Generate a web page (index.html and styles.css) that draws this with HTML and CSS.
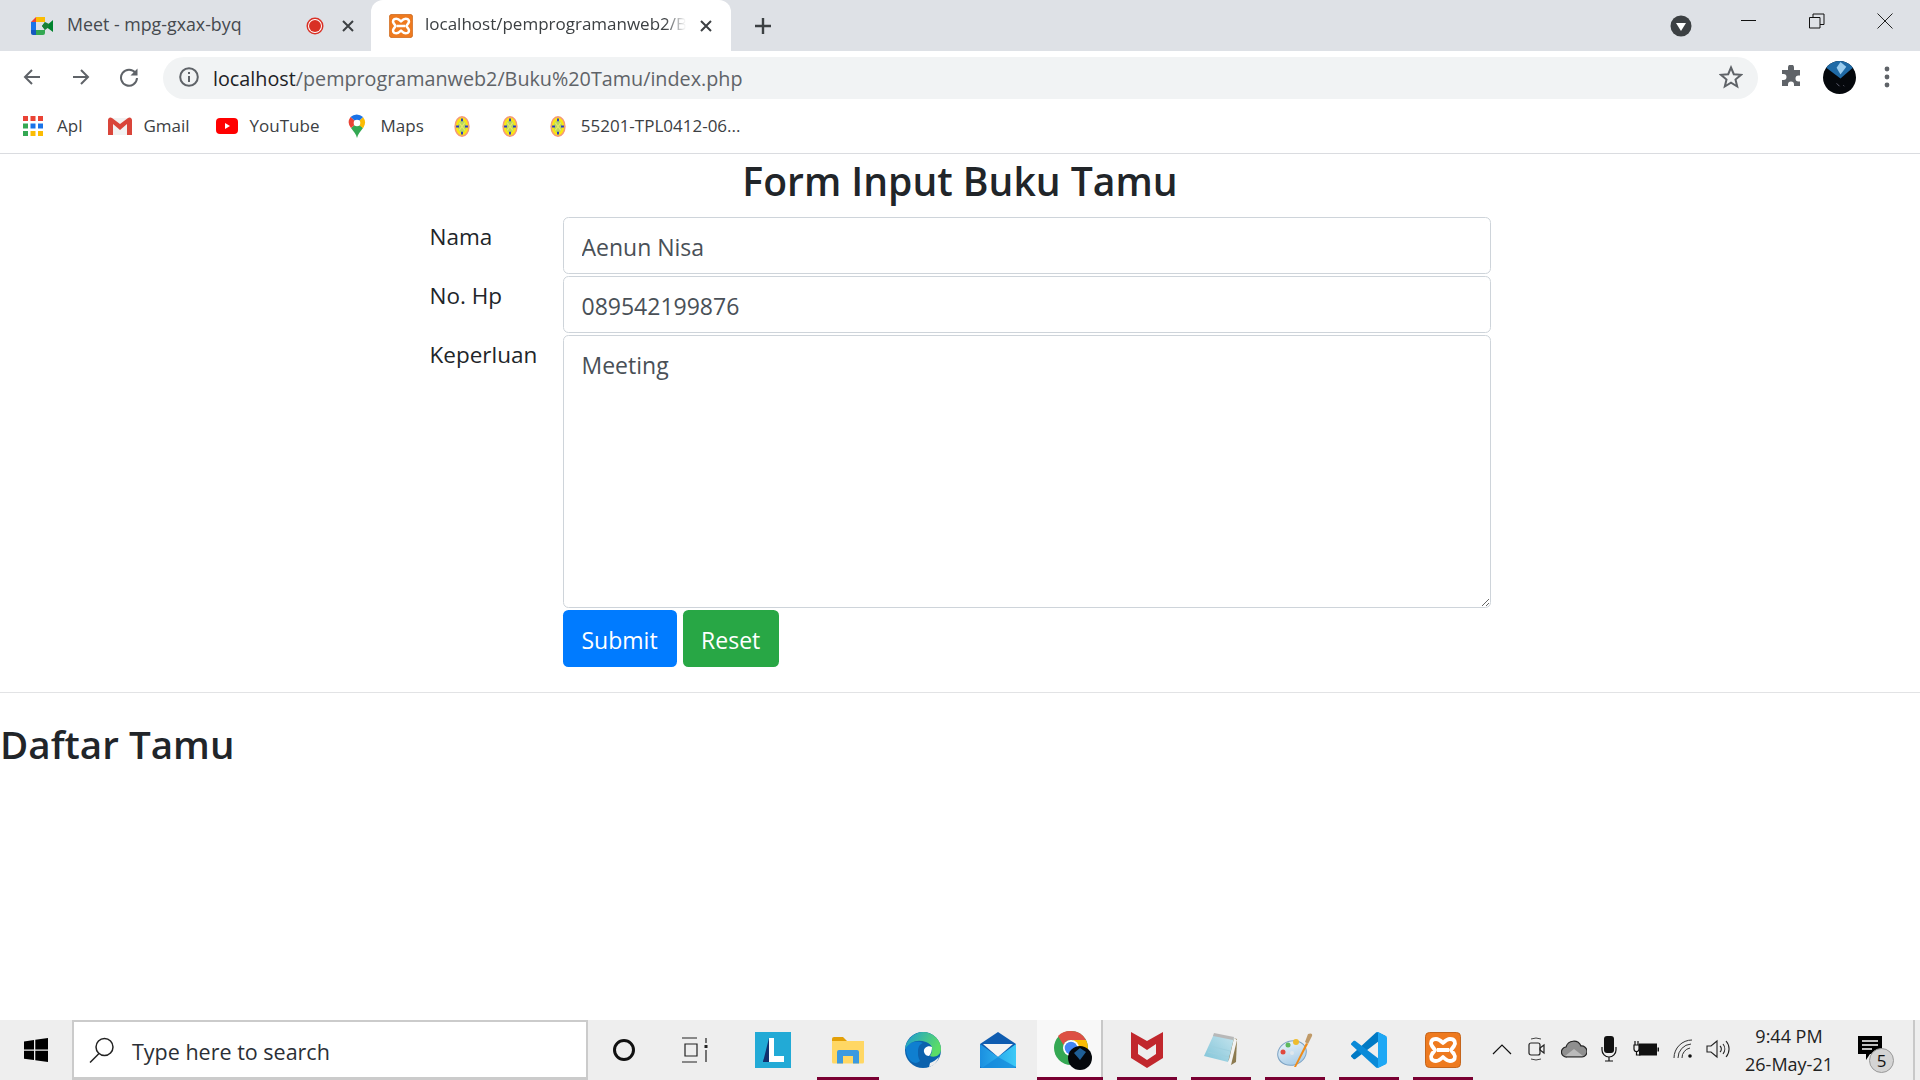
FILE: index.html
```html
<!DOCTYPE html>
<html lang="id">
<head>
<meta charset="utf-8">
<title>Form Input Buku Tamu</title>
<link rel="stylesheet" href="styles.css">
</head>
<body>
<header class="chrome">
  <div class="tabstrip">
    <div class="tab tab-inactive">
      <svg class="fav-meet" viewBox="0 0 22 18"><path d="M0 5 5 0v5z" fill="#ea4335"/><path d="M5 0h9v5H5z" fill="#fbbc04"/><path d="M0 5h5v8H0z" fill="#1a73e8"/><path d="M0 13h5v5H2a2 2 0 0 1-2-2z" fill="#1558c0"/><path d="M5 13h9v3a2 2 0 0 1-2 2H5z" fill="#34a853"/><path d="M14 0v5l-3 4 3 4v-3l8-7v12l-8-6z" fill="#00832d"/><path d="M14 5l-3 4 3 4 4-3V7z" fill="#188038"/><path d="M12 0h2v5h-3z" fill="#fbbc04"/></svg>
      <span class="tab-title">Meet - mpg-gxax-byq</span>
      <svg class="rec" viewBox="0 0 18 18"><circle cx="9" cy="9" r="8.500" fill="#d93025"/><circle cx="9" cy="9" r="7" fill="#fff"/><circle cx="9" cy="9" r="6" fill="#d93025"/></svg>
      <svg class="tab-x" viewBox="0 0 12 12"><path d="M1 1l10 10M11 1 1 11" stroke="#3c4043" stroke-width="2"/></svg>
    </div>
    <div class="tab tab-active">
      <svg class="fav-xampp" viewBox="0 0 36 36"><rect x=".5" y=".5" width="35" height="35" rx="4" fill="#ee7a1f" stroke="#c4651c"/><path d="M11 7C14 7 16 9 18 11 20 9 22 7 25 7 30 7 31 11 29 14L26 18 29 22C31 25 30 29 25 29 22 29 20 27 18 25 16 27 14 29 11 29 6 29 5 25 7 22L10 18 7 14C5 11 6 7 11 7ZM12 18H24" fill="none" stroke="#fff" stroke-width="3.800" stroke-linejoin="round"/></svg>
      <span class="tab-title tab-fade">localhost/pemprogramanweb2/B</span>
      <svg class="tab-x" viewBox="0 0 12 12"><path d="M1 1l10 10M11 1 1 11" stroke="#3c4043" stroke-width="2"/></svg>
    </div>
    <svg class="newtab" viewBox="0 0 18 18"><path d="M9 1v16M1 9h16" stroke="#3c4043" stroke-width="2.400"/></svg>
    <svg class="tabsearch" viewBox="0 0 22 22"><circle cx="11" cy="11" r="10.500" fill="#3c4043"/><path d="M6 8h10l-5 8z" fill="#fff"/></svg>
    <div class="winctl">
      <svg viewBox="0 0 16 16"><path d="M0 7.500h15" stroke="#111" stroke-width="1"/></svg>
      <svg viewBox="0 0 16 16"><path d="M.5 4.500h10.500v10.500H.5zM4 4.500V1h11v10.500h-4" fill="none" stroke="#111"/></svg>
      <svg viewBox="0 0 16 16"><path d="M.5.500l15 15M15.500.500l-15 15" stroke="#222"/></svg>
    </div>
  </div>
  <div class="toolbar">
    <svg class="nav nav-first" viewBox="0 0 20 20"><path d="M18 10H3M10 3l-7 7 7 7" fill="none" stroke="#5f6368" stroke-width="2"/></svg>
    <svg class="nav" viewBox="0 0 20 20"><path d="M2 10h15M10 3l7 7-7 7" fill="none" stroke="#5f6368" stroke-width="2"/></svg>
    <svg class="nav nav-reload" viewBox="0 0 20 20"><path d="M16.500 6A8 8 0 1 0 18 11" fill="none" stroke="#5f6368" stroke-width="2"/><path d="M18.500 1.500v7h-7z" fill="#5f6368"/></svg>
    <div class="omnibox">
      <svg class="info" viewBox="0 0 20 20"><circle cx="10" cy="10" r="8.800" fill="none" stroke="#5f6368" stroke-width="2"/><path d="M9 9h2v6H9zM9 5h2v2H9z" fill="#5f6368"/></svg>
      <span class="url"><b>localhost</b>/pemprogramanweb2/Buku%20Tamu/index.php</span>
      <svg class="star" viewBox="0 0 24 24"><path d="M12 2.500l2.800 6.700 7.200.6-5.500 4.700 1.700 7L12 17.700l-6.200 3.800 1.700-7L2 9.800l7.200-.6z" fill="none" stroke="#5f6368" stroke-width="2"/></svg>
    </div>
    <svg class="puzzle" viewBox="0 0 24 24"><path d="M9 3.500a3 3 0 0 1 6 0V6h6v5.500h-1.500a3 3 0 0 0 0 6H21V22h-6v-1.500a3 3 0 0 0-6 0V22H3v-6h1.500a3 3 0 0 0 0-6H3V6h6z" fill="#5f6368" transform="translate(0 -1)"/></svg>
    <svg class="avatar" viewBox="0 0 34 34"><defs><clipPath id="av"><circle cx="17" cy="17" r="17"/></clipPath></defs><g clip-path="url(#av)"><rect width="34" height="34" fill="#05080c"/><path d="M0 0h34v4L18 18 2 6 0 4z" fill="#1f6aa6"/><path d="M18 1l6 5-6 8-4-7z" fill="#9ccdee"/><path d="M21 25l1 1M14 23l3 3" stroke="#667" stroke-width="1"/></g></svg>
    <svg class="kebab" viewBox="0 0 6 22"><circle cx="3" cy="3" r="2.400" fill="#5f6368"/><circle cx="3" cy="11" r="2.400" fill="#5f6368"/><circle cx="3" cy="19" r="2.400" fill="#5f6368"/></svg>
  </div>
  <nav class="bookmarks">
    <span class="bm bm-apl">
      <svg class="ic-apps" viewBox="0 0 20 20"><g fill="#ea4335"><path d="M0 0h5v5H0zM7.500 0h5v5h-5zM15 0h5v5h-5z"/></g><path d="M0 7.500h5v5H0z" fill="#34a853"/><path d="M7.500 7.500h5v5h-5z" fill="#1a73e8"/><path d="M15 7.500h5v5h-5z" fill="#1a73e8"/><path d="M0 15h5v5H0z" fill="#34a853"/><path d="M7.500 15h5v5h-5z" fill="#fbbc04"/><path d="M15 15h5v5h-5z" fill="#fbbc04"/></svg>
      Apl</span>
    <span class="bm bm-gmail">
      <svg class="ic-gmail" viewBox="0 0 24 18"><path d="M3 1h18l1 1v16H2V2z" fill="#f2f2f2"/><path d="M0 3v15h5V7l7 6 7-6v11h5V3a2.500 2.500 0 0 0-4-2l-8 6-8-6a2.500 2.500 0 0 0-4 2z" fill="#d9453a"/></svg>
      Gmail</span>
    <span class="bm bm-yt">
      <svg class="ic-yt" viewBox="0 0 22 16"><rect width="22" height="16" rx="4" fill="#f00"/><path d="M9 5v6l5-3z" fill="#fff"/></svg>
      YouTube</span>
    <span class="bm bm-maps">
      <svg class="ic-maps" viewBox="0 0 18 24"><path d="M9 24c-1-4-3-6-6-10l6-5 6 5c-3 4-5 6-6 10z" fill="#34a853"/><path d="M15 14 9 9l6-6a9 9 0 0 1 0 11z" fill="#fbbc04"/><path d="M2.500 3a9 9 0 0 1 12.500 0L9 9z" fill="#1a73e8"/><path d="M2.500 3 9 9l-6 5a9 9 0 0 1-.5-11z" fill="#ea4335"/><path d="M15 14l-4-3 4-5a9 9 0 0 1 0 8z" fill="#fbbc04"/><circle cx="9" cy="9" r="3.300" fill="#fff"/></svg>
      Maps</span>
    <svg class="ic-flower" viewBox="0 0 16 22"><ellipse cx="8" cy="11" rx="8" ry="11" fill="#f59a76"/><ellipse cx="8" cy="11" rx="6.500" ry="9.300" fill="#fbe80f"/><ellipse cx="8" cy="11" rx="4.300" ry="6.500" fill="#b9d85c"/><path d="M5 7l6 8M11 7l-6 8" stroke="#e8e86a" stroke-width="1.200"/><path d="M7 2.500h2v3H7zM7 16.500h2v3H7zM1.800 10h3v2h-3zM11.200 10h3v2h-3z" fill="#2536c8"/></svg>
    <svg class="ic-flower" viewBox="0 0 16 22"><ellipse cx="8" cy="11" rx="8" ry="11" fill="#f59a76"/><ellipse cx="8" cy="11" rx="6.500" ry="9.300" fill="#fbe80f"/><ellipse cx="8" cy="11" rx="4.300" ry="6.500" fill="#b9d85c"/><path d="M5 7l6 8M11 7l-6 8" stroke="#e8e86a" stroke-width="1.200"/><path d="M7 2.500h2v3H7zM7 16.500h2v3H7zM1.800 10h3v2h-3zM11.200 10h3v2h-3z" fill="#2536c8"/></svg>
    <span class="bm bm-tpl">
      <svg class="ic-flower" viewBox="0 0 16 22"><ellipse cx="8" cy="11" rx="8" ry="11" fill="#f59a76"/><ellipse cx="8" cy="11" rx="6.500" ry="9.300" fill="#fbe80f"/><ellipse cx="8" cy="11" rx="4.300" ry="6.500" fill="#b9d85c"/><path d="M5 7l6 8M11 7l-6 8" stroke="#e8e86a" stroke-width="1.200"/><path d="M7 2.500h2v3H7zM7 16.500h2v3H7zM1.800 10h3v2h-3zM11.200 10h3v2h-3z" fill="#2536c8"/></svg>
      55201-TPL0412-06...</span>
  </nav>
</header>

<main class="page">
  <h2 class="title">Form Input Buku Tamu</h2>
  <form class="guest-form">
    <label class="lbl" for="nama">Nama</label>
    <input class="field" id="nama" type="text" value="Aenun Nisa">
    <label class="lbl" for="hp">No. Hp</label>
    <input class="field" id="hp" type="text" value="089542199876">
    <label class="lbl" for="perlu">Keperluan</label>
    <textarea class="field area" id="perlu">Meeting</textarea>
    <div class="actions">
      <button class="btn btn-blue" type="button">Submit</button>
      <button class="btn btn-green" type="button">Reset</button>
    </div>
  </form>
  <hr class="rule">
  <h2 class="subtitle">Daftar Tamu</h2>
</main>

<footer class="taskbar">
  <svg class="win" viewBox="0 0 24 24"><path d="M0 3.400 10 2v9.500H0zM11.300 1.800 24 0v11.500H11.300zM0 12.800h10v9.300L0 20.700zM11.300 12.800H24V24l-12.700-1.800z" fill="#000"/></svg>
  <div class="searchbox">
    <svg class="lens" viewBox="0 0 26 26"><circle cx="15.500" cy="10" r="8.500" fill="none" stroke="#222" stroke-width="1.500"/><path d="M10 16.500 1 25.500" stroke="#222" stroke-width="1.500"/></svg>
    <span class="search-text">Type here to search</span>
  </div>
  <svg class="cortana" viewBox="0 0 24 24"><circle cx="12" cy="12" r="9.500" fill="none" stroke="#111" stroke-width="3"/></svg>
  <svg class="taskview" viewBox="0 0 28 26"><path d="M1 1h15M4 7h12v12H4zM1 25h15M25 1v5M25 13v12" fill="none" stroke="#222" stroke-width="1.200"/><rect x="23.500" y="8" width="3" height="3" fill="#222"/></svg>
  <svg class="app app-l" viewBox="0 0 36 36"><rect width="36" height="36" fill="#22aad6"/><path d="M8 30 14 6v24z" fill="#12306e"/><path d="M14 6h5v18h10v6H14z" fill="#fff"/><path d="M8 30l1-3h5v3z" fill="#12306e"/></svg>
  <div class="cell cell-on cell-folder">
    <svg class="app" viewBox="0 0 36 36"><path d="M2 7a2 2 0 0 1 2-2h9l4 4H2z" fill="#e3a008"/><path d="M2 9h32v21a1.500 1.500 0 0 1-1.500 1.500h-29A1.500 1.500 0 0 1 2 30z" fill="#ffd764"/><path d="M7 31.500V20a2 2 0 0 1 2-2h18a2 2 0 0 1 2 2v11.500h-6V24H13v7.500z" fill="#3b9ae0"/></svg>
  </div>
  <div class="cell">
    <svg class="app" viewBox="0 0 36 36"><defs><linearGradient id="edg" x1="0" y1="0" x2="1" y2=".4"><stop offset="0" stop-color="#1b9ad6"/><stop offset="1" stop-color="#5bdc66"/></linearGradient></defs><circle cx="18" cy="18" r="18" fill="#0c62ad"/><path d="M1 14C6 9 14 9 18 11 14 14 11 22 15 29 8 35 0 26 1 14z" fill="#0f7fd0"/><path d="M18 0C28 0 36 8 36 17 36 24 29 26 25 24 29 18 27 12 21 10 13 7 5 9 0 17 1 8 9 0 18 0z" fill="url(#edg)"/><path d="M27 25C23 26 19 23 19 20 19 16 23 14 27 15 25 11 19 10 16 12 12 15 12 23 16 28 20 33 28 33 32 29 30 27 29 26 27 25z" fill="#0c62ad"/><path d="M19 20C18 16 23 13 27 15 27 18 26 22 24 24 22 24 20 23 19 20z" fill="#fff"/><path d="M25 31C28 30 31 28 34 25 32 31 28 34 24 35z" fill="#eee"/></svg>
  </div>
  <div class="cell">
    <svg class="app" viewBox="0 0 36 36"><defs><linearGradient id="ml" x1="0" y1="0" x2="1" y2="0"><stop offset="0" stop-color="#1b8fe0"/><stop offset="1" stop-color="#3ccaf7"/></linearGradient></defs><path d="M0 12 18 0l18 12v24H0z" fill="#0f5cb0"/><path d="M3 12h30L18 25z" fill="#f4f4f4"/><path d="M0 12l18 13 18-13v22a2 2 0 0 1-2 2H2a2 2 0 0 1-2-2z" fill="url(#ml)"/><path d="M2 36 18 25l18 10a2 2 0 0 1-2 1z" fill="#1384d8" opacity=".7"/></svg>
  </div>
  <div class="cell cell-on cell-active">
    <svg class="app app-chrome" viewBox="0 0 38 40"><circle cx="17" cy="18" r="17" fill="#34a853"/><path d="M17 1a17 17 0 0 1 15 9H17a8 8 0 0 0-7.500 5L4 6A17 17 0 0 1 17 1z" fill="#dd5044"/><path d="M32 10a17 17 0 0 1-6 22l-7-13a8 8 0 0 0 0-9z" fill="#fbbc04"/><circle cx="17" cy="18" r="8" fill="#fff"/><circle cx="17" cy="18" r="6.300" fill="#4285f4"/><circle cx="26" cy="28" r="12" fill="#05080c"/><path d="M20 23l6-5 6 4-6 8z" fill="#1f5f96"/></svg>
    <i class="sep"></i>
  </div>
  <div class="cell cell-on cell-side">
    <svg class="app" viewBox="0 0 32 36"><path fill-rule="evenodd" d="M0 0 16 9 32 0V26L16 36 0 26zM7 12 16 18 25 12V22L16 28 7 22z" fill="#c1272d"/></svg>
  </div>
  <div class="cell cell-on cell-side">
    <svg class="app" viewBox="0 0 36 36"><defs><linearGradient id="np" x1="0" y1="1" x2="1" y2="0"><stop offset="0" stop-color="#7fc4d8"/><stop offset="1" stop-color="#c6e4ee"/></linearGradient></defs><path d="M12 2 34 7 33 30 28 33z" fill="#8c7a4f"/><path d="M31 6 34 8 28 33 25 32z" fill="#f3f3f3"/><path d="M11 2 31 6 25 30 1 24z" fill="url(#np)"/><path d="M11 1 31 5 30 8 10 4z" fill="#b8b8b8"/><path d="M5 20 26 25M7 14 27 19" stroke="#9ed0df" stroke-width="1"/></svg>
  </div>
  <div class="cell cell-on cell-side">
    <svg class="app" viewBox="0 0 36 36"><defs><linearGradient id="pl" x1="0" y1="0" x2="0" y2="1"><stop offset="0" stop-color="#e6f0f8"/><stop offset="1" stop-color="#a9cde8"/></linearGradient></defs><ellipse cx="15" cy="21" rx="14.500" ry="12" fill="url(#pl)" stroke="#7da3c4" transform="rotate(-18 15 21)"/><circle cx="6" cy="20" r="2.500" fill="#e0483e"/><circle cx="11" cy="13" r="2.500" fill="#5cb85c"/><circle cx="19" cy="10" r="3" fill="#eebc2f"/><circle cx="15" cy="21" r="2" fill="#dfe7ee"/><path d="M17 35 29 11l2 1L19 35z" fill="#ef8c1a"/><path d="M28 10 31 2C33 1 36 1 35 4L31 12z" fill="#c09a68"/></svg>
  </div>
  <div class="cell cell-on cell-side">
    <svg class="app" viewBox="0 0 100 100"><path d="M96.460 10.800 75.860.9C73.470-.25 70.620.24 68.750 2.110L1.340 63.580c-1.810 1.650-1.810 4.510 0 6.160l5.510 5.010c1.490 1.350 3.720 1.450 5.320.24L93.400 13.370c2.730-2.070 6.640-.12 6.640 3.300v-.24c0-2.400-1.370-4.580-3.540-5.630z" fill="#0079c4"/><path d="M96.460 89.200 75.860 99.100c-2.390 1.150-5.240.66-7.110-1.210L1.340 36.420c-1.810-1.650-1.810-4.510 0-6.160l5.510-5.010c1.490-1.350 3.720-1.450 5.320-.24L93.400 86.630c2.730 2.070 6.640.12 6.640-3.300v.24c0 2.400-1.370 4.580-3.540 5.630z" fill="#0a8ad8"/><path d="M75.860 99.130c-2.390 1.150-5.240.66-7.110-1.210 2.310 2.310 6.250.67 6.250-2.590V4.670c0-3.260-3.940-4.900-6.250-2.590 1.870-1.870 4.720-2.360 7.110-1.210l20.600 9.910C98.600 11.810 100 13.990 100 16.370v67.260c0 2.380-1.360 4.560-3.540 5.630z" fill="#1fa8f5"/></svg>
  </div>
  <div class="cell cell-on cell-side">
    <svg class="app" viewBox="0 0 36 36"><rect x=".5" y=".5" width="35" height="35" rx="4" fill="#ee7a1f" stroke="#c4651c"/><path d="M11 7C14 7 16 9 18 11 20 9 22 7 25 7 30 7 31 11 29 14L26 18 29 22C31 25 30 29 25 29 22 29 20 27 18 25 16 27 14 29 11 29 6 29 5 25 7 22L10 18 7 14C5 11 6 7 11 7ZM12 18H24" fill="none" stroke="#fff" stroke-width="3.800" stroke-linejoin="round"/></svg>
  </div>
  <div class="tray">
    <svg class="t-chev" viewBox="0 0 20 12"><path d="M1 11l9-9 9 9" fill="none" stroke="#111" stroke-width="1.200"/></svg>
    <svg class="t-cam" viewBox="0 0 18 24"><rect x="1" y="6" width="11" height="12" rx="2" fill="none" stroke="#222" stroke-width="1.200"/><path d="M12 11l4-3v8l-4-3z" fill="none" stroke="#222" stroke-width="1.200"/><path d="M3 2q5-2 10 0M3 22q5 2 10 0" fill="none" stroke="#444"/></svg>
    <svg class="t-cloud" viewBox="0 0 26 18"><path d="M6 17a5 5 0 0 1-1-10 8 8 0 0 1 15-1 5.500 5.500 0 0 1 1 11z" fill="#8f8f8f" stroke="#222" stroke-width="1.200"/><path d="M4 16l9-7 9 7z" fill="#bbb"/></svg>
    <svg class="t-mic" viewBox="0 0 16 26"><rect x="3" y="0" width="10" height="17" rx="3" fill="#111"/><path d="M1 11v3a7 7 0 0 0 14 0v-3M8 21v4M4 25h8" fill="none" stroke="#111" stroke-width="1.200"/></svg>
    <svg class="t-batt" viewBox="0 0 26 18"><path d="M2 1v4M5 1v4M1 5h5v4a2.500 2.500 0 0 1-5 0zM3.500 12v3h4" fill="none" stroke="#111" stroke-width="1.200"/><rect x="6.500" y="4" width="17" height="11" fill="#111" stroke="#111"/><rect x="24.500" y="7.500" width="1.500" height="4" fill="#111"/></svg>
    <svg class="t-wifi" viewBox="0 0 20 20"><path d="M1 19A18 18 0 0 1 19 1M5 19A14 14 0 0 1 18 5M9 19a10 10 0 0 1 8-10" fill="none" stroke="#333" stroke-width="1"/><circle cx="17" cy="17" r="1.800" fill="#111"/></svg>
    <svg class="t-vol" viewBox="0 0 24 20"><path d="M1 7h4l6-5v16l-6-5H1z" fill="none" stroke="#222" stroke-width="1.100"/><path d="M14 7a4 4 0 0 1 0 6M17 5a8 8 0 0 1 0 10M20 2a12 12 0 0 1 0 16" fill="none" stroke="#222" stroke-width="1.100"/></svg>
    <div class="clock"><span>9:44 PM</span><span>26-May-21</span></div>
    <div class="notify">
      <svg class="t-msg" viewBox="0 0 24 24"><path d="M0 0h24v18H12l-4 6v-6H0z" fill="#000"/><path d="M4 5h16M4 9h16M4 13h10" stroke="#fff" stroke-width="1.300"/></svg>
      <span class="badge">5</span>
    </div>
    <i class="edge-sliver"></i>
  </div>
</footer>
</body>
</html>
```
FILE: styles.css
```css
* { box-sizing: border-box; }
html, body { margin: 0; height: 100%; }
body {
  width: 1920px; height: 1080px; overflow: hidden;
  display: flex; flex-direction: column;
  background: #fff; color: #212529;
  font-family: "Open Sans", "Noto Sans", sans-serif;
}
svg { display: block; flex: none; }

/* tab strip */
.tabstrip { height: 51px; background: #dee1e6; display: flex; align-items: center; position: relative; }
.tab { height: 51px; display: flex; align-items: center; font-size: 17.800px; color: #45494e; }
.tab-inactive { width: 371px; padding: 0 17px 0 31px; }
.tab-active { width: 360px; background: #fff; border-radius: 12px 12px 0 0; padding: 0 19px 0 18px; font-size: 17px; }
.tab-title { white-space: nowrap; margin-bottom: 4px; }
.tab-inactive .tab-title { width: 239px; margin-left: 14px; }
.tab-active .tab-title { margin-left: 12px; color: #3c4043; }
.tab-fade { -webkit-mask-image: linear-gradient(90deg, #000 240px, transparent 261px); mask-image: linear-gradient(90deg, #000 240px, transparent 261px); }
.fav-meet { width: 22px; height: 18px; }
.fav-xampp { width: 24px; height: 24px; }
.rec { width: 18px; height: 18px; }
.tab-x { width: 12px; height: 12px; margin-left: auto; }
.newtab { width: 18px; height: 18px; margin-left: 23px; }
.tabsearch { width: 22px; height: 22px; margin-left: 898px; }
.winctl { display: flex; align-items: flex-start; margin-left: 49px; gap: 52px; align-self: flex-start; padding-top: 13px; }
.winctl svg { width: 16px; height: 16px; }

/* toolbar */
.toolbar { height: 51px; display: flex; align-items: center; padding-top: 3px; }
.toolbar > svg { margin-top: -2px; }
.nav { width: 20px; height: 20px; margin-left: 29px; }
.nav-first { margin-left: 22px; }
.nav-reload { margin-left: 28px; }
.omnibox { width: 1595px; height: 42px; margin-left: 24px; border-radius: 21px; background: #f1f3f4; display: flex; align-items: center; padding: 0 15px 0 16px; }
.info { width: 20px; height: 20px; margin-top: -2px; }
.url { font-size: 19.750px; color: #5f6368; margin-left: 14px; white-space: nowrap; }
.url b { font-weight: 400; color: #202124; }
.star { width: 24px; height: 24px; margin-left: auto; margin-top: -2px; }
.puzzle { width: 24px; height: 24px; margin-left: 21px; }
.avatar { width: 33px; height: 33px; margin-left: 20px; }
.kebab { width: 6px; height: 22px; margin-left: 28px; }

/* bookmarks */
.bookmarks { height: 52px; border-bottom: 1px solid #dadce0; display: flex; align-items: center; font-size: 17px; color: #3c4043; padding-left: 23px; padding-bottom: 5px; }
.bm { display: flex; align-items: center; white-space: nowrap; }
.bm svg, .bookmarks > svg { margin-top: 2px; }
.ic-apps { width: 20px; height: 20px; margin-right: 14px; }
.bm-gmail { margin-left: 26px; }
.ic-gmail { width: 24px; height: 18px; margin-right: 11px; }
.bm-yt { margin-left: 26px; }
.ic-yt { width: 22px; height: 16px; margin-right: 12px; }
.bm-maps { margin-left: 28px; }
.ic-maps { width: 18px; height: 24px; margin-right: 15px; }
.ic-flower { width: 16px; height: 21px; margin-left: 30px; }
.ic-flower + .ic-flower { margin-left: 32px; }
.bm-tpl { margin-left: 32px; }
.bm-tpl .ic-flower { margin: 2px 15px 0 0; }

/* page */
.page { flex: 1; display: flex; flex-direction: column; }
.title { margin: 0; height: 63px; line-height: 54px; text-align: center; font-size: 39.100px; font-weight: 600; }
.guest-form { width: 1061px; margin: 0 auto; display: grid; grid-template-columns: 133px 928px; row-gap: 2px; font-size: 23px; }
.lbl { line-height: 34px; padding-top: 3px; font-size: 22.500px; }
.field { display: block; width: 100%; height: 57px; padding: 3px 18px 0; border: 1.500px solid #ced4da; border-radius: 5.500px; color: #495057; font: inherit; background: #fff; outline: none; }
.area { height: 273px; padding-top: 12px; line-height: 34px; resize: vertical; }
.actions { grid-column: 2; display: flex; gap: 6px; }
.btn { height: 57px; padding: 2px 18.500px 0; border: 0; border-radius: 5.500px; color: #fff; font: inherit; }
.btn-blue { background: #007bff; padding: 2px 19px 0; }
.btn-green { background: #28a745; }
.rule { width: 100%; margin: 25px 0 0; border: 0; border-top: 1.500px solid #e2e3e5; }
.subtitle { margin: 26px 0 0 0; font-size: 38.600px; line-height: 50px; font-weight: 600; }

/* taskbar */
.taskbar { height: 60px; background: #eeeeee; display: flex; align-items: center; }
.win { width: 24px; height: 24px; margin-left: 24px; }
.searchbox { width: 516px; height: 60px; margin-left: 24px; background: #fff; border: 2px solid #cbcbcb; border-bottom-width: 3px; display: flex; align-items: center; }
.lens { width: 26px; height: 26px; margin-left: 15px; }
.search-text { font-size: 21.500px; color: #2b2f36; margin-left: 17px; padding-top: 4px; }
.cortana { width: 24px; height: 24px; margin-left: 24px; }
.taskview { width: 28px; height: 26px; margin-left: 45px; }
.app { width: 36px; height: 36px; }
.app-l { margin-left: 46px; }
.cell { width: 62px; height: 60px; margin-left: 13px; display: flex; align-items: center; justify-content: center; position: relative; }
.cell-on::after { content: ""; position: absolute; left: 0; right: 0; bottom: 0; height: 3px; background: #7a0032; }
.taskbar .cell-folder { margin-left: 26px; }
.taskbar .cell-active { width: 66px; margin-left: 8px; background: #f8f8f8; }
.taskbar .cell-side { width: 60px; margin-left: 14px; }
.app-chrome { width: 38px; height: 40px; margin-left: 6px; }
.sep { position: absolute; right: 0; top: 0; bottom: 0; width: 2px; background: #c8c8c8; }
.tray { display: flex; align-items: center; height: 60px; margin-left: 18px; flex: 1; padding-bottom: 2px; position: relative; }
.t-chev { width: 20px; height: 12px; margin-left: 1px; }
.t-cam { width: 18px; height: 24px; margin-left: 16px; }
.t-cloud { width: 26px; height: 18px; margin-left: 15px; }
.t-mic { width: 16px; height: 26px; margin-left: 14px; }
.t-batt { width: 26px; height: 18px; margin-left: 16px; }
.t-wifi { width: 20px; height: 20px; margin-left: 14px; }
.t-vol { width: 24px; height: 20px; margin-left: 13px; }
.clock { width: 100px; margin-left: 9px; display: flex; flex-direction: column; align-items: center; font-size: 18px; line-height: 28px; color: #222; white-space: nowrap; padding-top: 2px; }
.notify { position: relative; margin-left: 19px; }
.t-msg { width: 24px; height: 24px; margin-top: -2px; }
.badge { position: absolute; left: 11px; top: 10px; width: 25px; height: 25px; border-radius: 50%; background: #d4d4d4; border: 1px solid #999; font-size: 17px; line-height: 23px; text-align: center; color: #111; }
.edge-sliver { position: absolute; right: 5px; top: 0; bottom: -2px; width: 2px; background: #c8c8c8; }
```
